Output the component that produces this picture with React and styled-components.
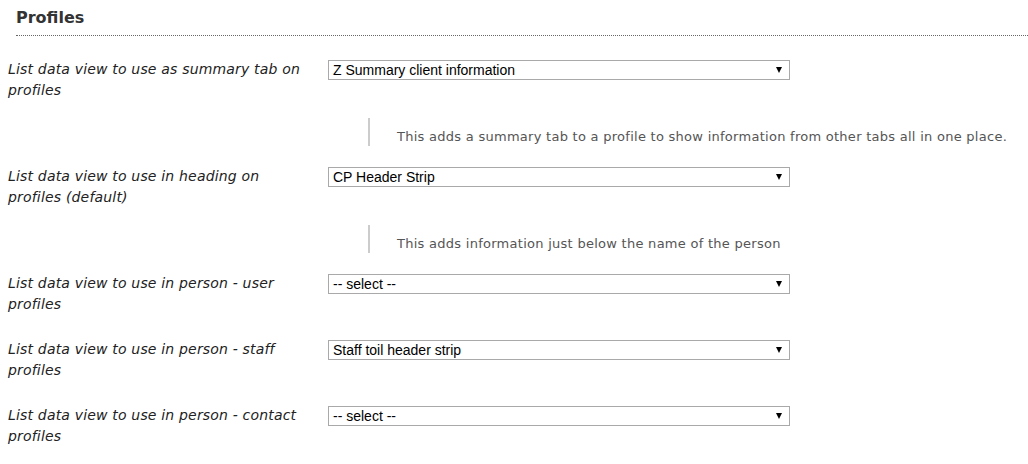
import React from 'react';
import styled, { createGlobalStyle } from 'styled-components';

const GlobalStyle = createGlobalStyle`
	html, body {
		margin: 0;
		padding: 0;
		background: #ffffff;
	}
	body {
		font-family: Verdana, 'DejaVu Sans', sans-serif;
		color: #333333;
	}
`;

const fields = [
	{
		label: 'List data view to use as summary tab on profiles',
		value: 'Z Summary client information',
		help: 'This adds a summary tab to a profile to show information from other tabs all in one place.',
	},
	{
		label: 'List data view to use in heading on profiles (default)',
		value: 'CP Header Strip',
		help: 'This adds information just below the name of the person',
	},
	{
		label: 'List data view to use in person - user profiles',
		value: '-- select --',
	},
	{
		label: 'List data view to use in person - staff profiles',
		value: 'Staff toil header strip',
	},
	{
		label: 'List data view to use in person - contact profiles',
		value: '-- select --',
	},
];

const App = () => {
	return (
		<>
			<GlobalStyle />
			<Page>
				<Heading>Profiles</Heading>
				<Form>
					{fields.map((el, idx) => (
						<Field key={idx}>
							<Row>
								<Label>{el.label}</Label>
								<SelectWrap>
									<Select defaultValue={el.value}>
										<option>{el.value}</option>
									</Select>
								</SelectWrap>
							</Row>
							{el.help && <Help>{el.help}</Help>}
						</Field>
					))}
				</Form>
			</Page>
		</>
	);
};

export default App;

const Page = styled.div`
	width: 1028px;
	padding-top: 7px;
`;
const Heading = styled.h2`
	margin: 0 0 0 16px;
	padding: 0 0 7px;
	font-size: 16px;
	font-weight: bold;
	line-height: 21px;
	color: #333333;
	border-bottom: 1px dotted #666666;
`;
const Form = styled.div`
	display: flex;
	flex-direction: column;
	padding: 23px 0 0 8px;
`;
const Field = styled.div`
	display: flex;
	flex-direction: column;
	margin-bottom: 24px;
`;
const Row = styled.div`
	display: flex;
	align-items: flex-start;
	min-height: 42px;
`;
const Label = styled.div`
	width: 306px;
	margin-right: 14px;
	font-size: 14px;
	font-style: italic;
	line-height: 21px;
	letter-spacing: 0.18px;
	color: #222222;
`;
const SelectWrap = styled.div`
	position: relative;
	margin-top: 1px;
	&::after {
		content: '';
		position: absolute;
		right: 8px;
		top: 7px;
		border-left: 3.5px solid transparent;
		border-right: 3.5px solid transparent;
		border-top: 6px solid #000000;
		pointer-events: none;
	}
`;
const Select = styled.select`
	appearance: none;
	-webkit-appearance: none;
	display: block;
	width: 462px;
	height: 20px;
	margin: 0;
	padding: 0 20px 0 4px;
	border: 1px solid #a9a9a9;
	border-radius: 0;
	background: #ffffff;
	font-family: Arial, 'Liberation Sans', sans-serif;
	font-size: 14px;
	color: #000000;
	outline: none;
`;
const Help = styled.div`
	margin: 17px 0 -4px 360px;
	padding: 10px 0 0 27px;
	border-left: 2px solid #cccccc;
	font-size: 13px;
	line-height: 18px;
	letter-spacing: 0.27px;
	color: #555555;
`;
